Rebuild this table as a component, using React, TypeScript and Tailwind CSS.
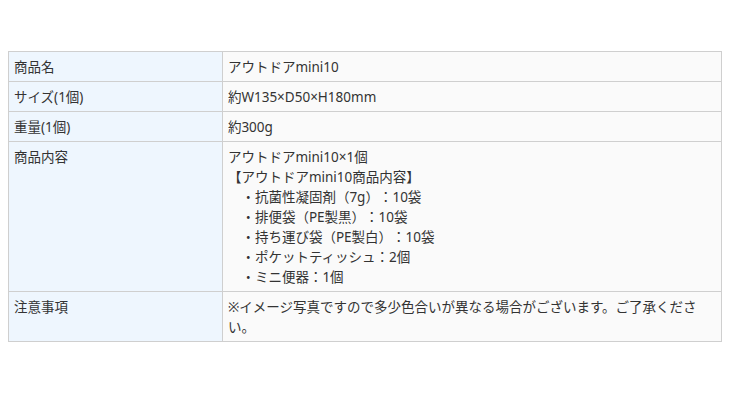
export default function App() {
  const th = "w-[30%] align-top text-left font-normal bg-[#eef6fe] border border-[#cfcfcf] px-[5px] pt-[5px] pb-[4px]";
  const td = "align-top bg-[#fafafa] border border-[#cfcfcf] px-[5px] pt-[5px] pb-[4px]";
  return (
    <div
      className="w-[730px] h-[400px] bg-white pt-[51px] px-[8px] [text-spacing-trim:space-all]"
      style={{ fontFamily: '"Noto Sans", "Noto Sans CJK JP", sans-serif' }}
    >
      <table className="w-full border-collapse text-[13.5px] leading-[20px] text-[#333]">
        <tbody>
          <tr>
            <th className={th}>商品名</th>
            <td className={td}>アウトドアmini10</td>
          </tr>
          <tr>
            <th className={th}>サイズ(1個)</th>
            <td className={td}>約W135×D50×H180mm</td>
          </tr>
          <tr>
            <th className={th}>重量(1個)</th>
            <td className={td}>約300g</td>
          </tr>
          <tr>
            <th className={th}>商品内容</th>
            <td className={td}>
              <div>アウトドアmini10×1個</div>
              <div>【アウトドアmini10商品内容】</div>
              <div>　・抗菌性凝固剤（7g）：10袋</div>
              <div>　・排便袋（PE製黒）：10袋</div>
              <div>　・持ち運び袋（PE製白）：10袋</div>
              <div>　・ポケットティッシュ：2個</div>
              <div>　・ミニ便器：1個</div>
            </td>
          </tr>
          <tr>
            <th className={th}>注意事項</th>
            <td className={td}>
              ※イメージ写真ですので多少色合いが異なる場合がございます。ご了承くださ<br />い。
            </td>
          </tr>
        </tbody>
      </table>
    </div>
  );
}
